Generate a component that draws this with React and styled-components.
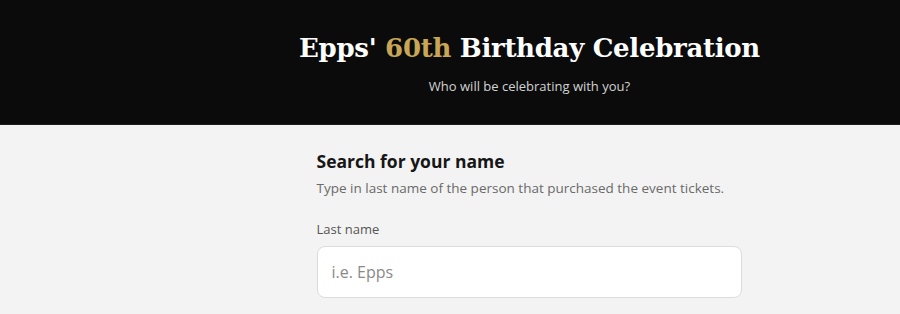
import React from "react";
import styled, { createGlobalStyle } from "styled-components";

const Global = createGlobalStyle`
  html, body { margin: 0; padding: 0; background: #f3f3f3; }
  body { font-family: "Open Sans", "Noto Sans", sans-serif; }
  * { box-sizing: border-box; }
`;

const Header = styled.header`
  background: #0b0b0b;
  height: 125px;
  display: flex;
  flex-direction: column;
  align-items: center;
  padding: 30px 0 0 159px;
  border-bottom: 1px solid #1c1c1c;
`;

const Title = styled.h1`
  margin: 0;
  font-family: "DejaVu Serif", "Liberation Serif", serif;
  font-weight: 700;
  font-size: 26px;
  letter-spacing: -0.3px;
  line-height: 36px;
  color: #ffffff;
  white-space: nowrap;
`;

const Gold = styled.span`
  color: #c8a655;
`;

const Subtitle = styled.p`
  margin: 11px 0 0;
  font-size: 13px;
  line-height: 18px;
  color: #d2d2d2;
`;

const Main = styled.main`
  display: flex;
  justify-content: center;
  padding: 24px 0 0 158px;
`;

const Column = styled.section`
  width: 425px;
  display: flex;
  flex-direction: column;
`;

const Heading = styled.h2`
  margin: 0;
  font-size: 17.5px;
  line-height: 24px;
  font-weight: 700;
  color: #161616;
`;

const Description = styled.p`
  margin: 5px 0 0;
  font-size: 13.5px;
  line-height: 20px;
  color: #6a6a6a;
`;

const Label = styled.label`
  margin-top: 22px;
  font-size: 13px;
  line-height: 18px;
  color: #555;
`;

const Input = styled.input`
  margin-top: 8px;
  height: 52px;
  width: 100%;
  border: 1px solid #dcdcdc;
  border-radius: 8px;
  background: #fff;
  padding: 0 14px;
  font-family: "Open Sans", "Noto Sans", sans-serif;
  font-size: 16px;
  color: #222;
  outline: none;
  &::placeholder { color: #8a8a8a; }
`;

export default function App() {
  return (
    <>
      <Global />
      <Header>
        <Title>
          Epps' <Gold>60th</Gold> Birthday Celebration
        </Title>
        <Subtitle>Who will be celebrating with you?</Subtitle>
      </Header>
      <Main>
        <Column>
          <Heading>Search for your name</Heading>
          <Description>
            Type in last name of the person that purchased the event tickets.
          </Description>
          <Label htmlFor="lastname">Last name</Label>
          <Input id="lastname" placeholder="i.e. Epps" />
        </Column>
      </Main>
    </>
  );
}
